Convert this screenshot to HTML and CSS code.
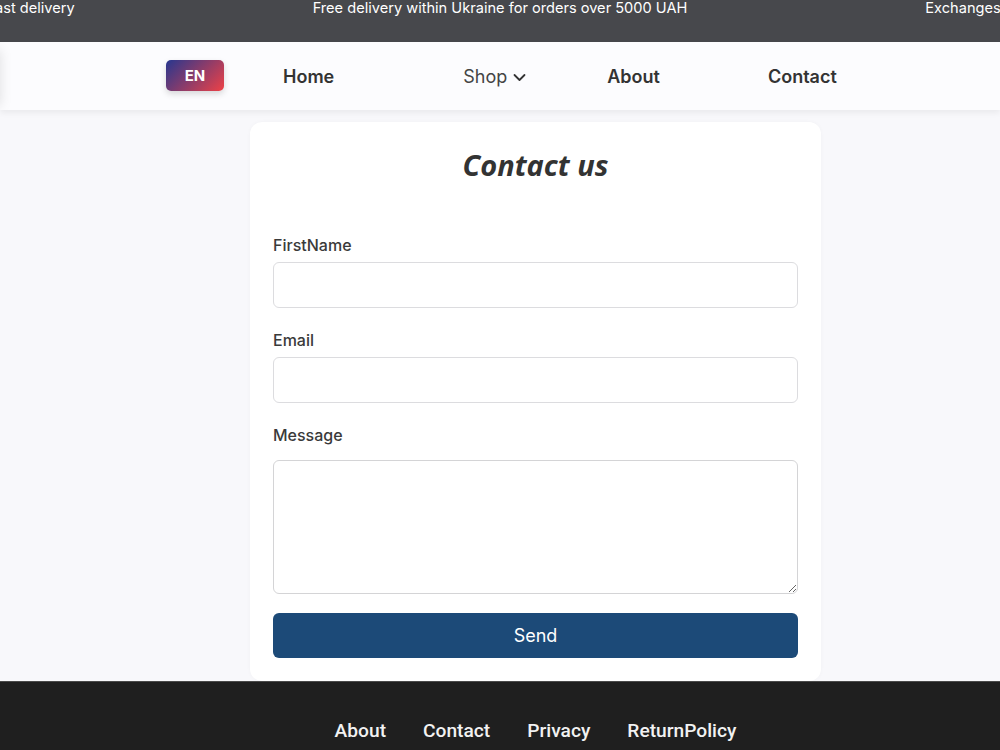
FILE: index.html
```html
<!DOCTYPE html>
<html lang="en">
<head>
    <meta charset="UTF-8">
    <meta name="viewport" content="width=device-width, initial-scale=1.0">
    <title>Contact us</title>
    <link rel="stylesheet" href="styles.css">
</head>
<body>
    <div class="announce">
        <div class="announce-track">
            <span class="announce-item left">Fast delivery</span>
            <span class="announce-item">Free delivery within Ukraine for orders over 5000 UAH</span>
            <span class="announce-item right">Exchanges and returns within 14 days</span>
        </div>
    </div>

    <header class="navbar">
        <div class="drawer"></div>
        <nav class="nav-inner">
            <button type="button" class="lang">EN</button>
            <a href="#" class="nav-link home">Home</a>
            <a href="#" class="nav-link shop">Shop
                <svg class="chevron" width="13" height="9" viewBox="0 0 13 9" fill="none">
                    <path d="M1.5 2l5 5 5-5" stroke="#333" stroke-width="1.8" stroke-linecap="round" stroke-linejoin="round"/>
                </svg>
            </a>
            <a href="#" class="nav-link about">About</a>
            <a href="#" class="nav-link contact">Contact</a>
        </nav>
    </header>

    <main class="page">
        <div class="card">
            <h1>Contact us</h1>
            <form id="contactForm">
                <div class="form-group">
                    <label for="firstName">FirstName</label>
                    <input type="text" id="firstName">
                </div>
                <div class="form-group">
                    <label for="email">Email</label>
                    <input type="email" id="email">
                </div>
                <div class="form-group last">
                    <label for="message">Message</label>
                    <textarea id="message"></textarea>
                </div>
                <button type="submit" class="send">Send</button>
            </form>
        </div>
    </main>

    <footer class="footer">
        <div class="footer-links">
            <a href="#">About</a>
            <a href="#">Contact</a>
            <a href="#">Privacy</a>
            <a href="#">ReturnPolicy</a>
        </div>
    </footer>
</body>
</html>
```

FILE: styles.css
```css
* {
    box-sizing: border-box;
}
body {
    margin: 0;
    font-family: Inter, "Liberation Sans", sans-serif;
    background-color: #f8f8fb;
    color: #333;
    overflow: hidden;
}
a {
    text-decoration: none;
    color: inherit;
}

/* running line on top */
.announce {
    height: 42px;
    background-color: #47484c;
    color: #fff;
    overflow: hidden;
}
.announce-track {
    display: grid;
    grid-template-columns: minmax(0, 1fr) auto minmax(0, 1fr);
    column-gap: 238px;
    font-size: 14.6px;
    line-height: 16px;
    white-space: nowrap;
}
.announce-item.left {
    justify-self: end;
}
.announce-item.right {
    justify-self: start;
}

/* main menu */
.navbar {
    position: relative;
    height: 68px;
    background-color: #fcfcfe;
    box-shadow: 0 3px 6px rgba(0,0,0,0.06);
    overflow: hidden;
}
.drawer {
    position: absolute;
    left: -300px;
    top: 8px;
    width: 300px;
    height: 56px;
    background-color: #fcfcfe;
    box-shadow: 0 0 12px rgba(0,0,0,0.12);
}
.nav-inner {
    display: flex;
    align-items: center;
    height: 100%;
    padding-left: 166px;
    font-size: 18px;
}
.lang {
    width: 58px;
    height: 31px;
    margin-top: -2px;
    border: none;
    border-radius: 5px;
    background: linear-gradient(135deg, #27378f 0%, #ee4146 100%);
    color: #fff;
    font-family: Inter, sans-serif;
    font-size: 15px;
    font-weight: 700;
    box-shadow: 0 3px 6px rgba(0,0,0,0.15);
    cursor: pointer;
}
.nav-link {
    font-weight: 600;
    color: #333;
}
.nav-link.home {
    margin-left: 59px;
}
.nav-link.shop {
    margin-left: 129px;
    font-weight: 400;
    color: #444;
    display: flex;
    align-items: center;
    gap: 6px;
}
.chevron {
    margin-top: 3px;
}
.nav-link.about {
    margin-left: 81px;
}
.nav-link.contact {
    margin-left: 108px;
}

/* contact card */
.page {
    padding: 12px 0 0 250px;
}
.card {
    width: 571px;
    height: 559px;
    background-color: #fff;
    border-radius: 12px;
    padding: 20px 23px;
    box-shadow: 0 0 4px rgba(0,0,0,0.03);
}
h1 {
    margin: 0 0 45px;
    text-align: center;
    font-family: "Open Sans", sans-serif;
    font-style: italic;
    font-weight: 700;
    font-size: 29px;
    line-height: 46px;
    color: #333;
}
.form-group {
    margin-bottom: 20px;
}
.form-group.last {
    margin-bottom: 19px;
}
label {
    display: block;
    margin-bottom: 5px;
    font-size: 16px;
    font-weight: 500;
    line-height: 24px;
    color: #3a3a3a;
}
input,
textarea {
    display: block;
    width: 100%;
    height: 46px;
    border: 1px solid #dcdcdf;
    border-radius: 6px;
    background-color: #fff;
    font-family: Inter, sans-serif;
    font-size: 16px;
    padding: 8px 12px;
}
textarea {
    height: 134px;
    margin-top: 13px;
    resize: vertical;
    border-color: #d4d4d6;
}
.send {
    display: block;
    width: 100%;
    height: 45px;
    border: none;
    border-radius: 6px;
    background-color: #1c4a78;
    color: #fff;
    font-family: Inter, sans-serif;
    font-size: 18px;
    cursor: pointer;
}

/* bottom links */
.footer {
    height: 80px;
    background-color: #1f1f1f;
    border-top: 1px solid #4a4a4a;
}
.footer-links {
    width: 571px;
    margin-left: 250px;
    padding-top: 37px;
    display: flex;
    justify-content: center;
    gap: 37px;
    font-family: Roboto, sans-serif;
    font-weight: 500;
    font-size: 19.2px;
    color: #f2f2f2;
}
```
